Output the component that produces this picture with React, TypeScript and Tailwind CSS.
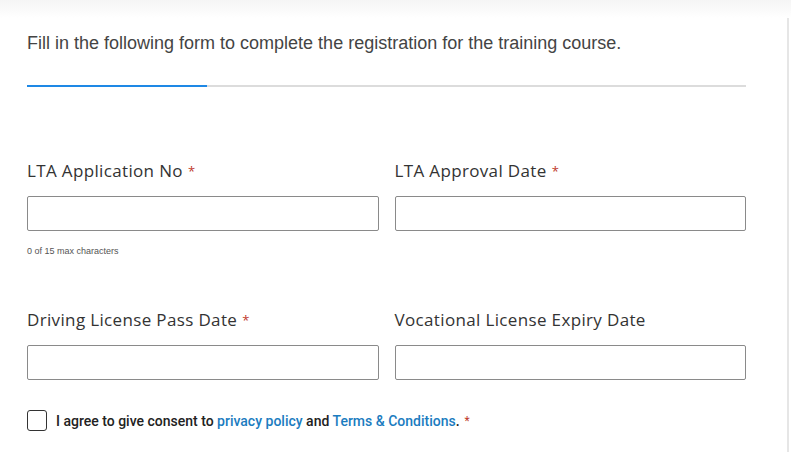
import React from "react";

const labelCls =
  "text-[17px] leading-[20px] tracking-[0.35px] text-[#333] font-['Open_Sans',sans-serif] h-[20px] whitespace-nowrap";
const inputCls = "mt-[15px] h-[35px] w-full border border-[#8a8a8a] rounded-[2px] bg-white outline-none";

function Star() {
  return <span className="text-[#c0392b] text-[13px] ml-[5px] align-top tracking-normal">*</span>;
}

export default function App() {
  return (
    <div className="w-[791px] h-[452px] bg-white relative overflow-hidden">
      <div className="absolute top-0 left-0 right-0 h-[18px] bg-gradient-to-b from-[#f5f5f5] to-white" />
      <div className="absolute top-[18px] right-[2px] bottom-0 w-[2px] bg-[#e6e6e6]" />
      <div className="relative pl-[27px] pr-[45px] pt-[32px]">
        <p className="text-[18px] leading-[22px] text-[#444] font-['Liberation_Sans',sans-serif]">
          Fill in the following form to complete the registration for the training course.
        </p>
        <div className="mt-[31px] flex h-[2px] w-[719px]">
          <div className="w-[180px] bg-[#1e88e5]" />
          <div className="flex-1 bg-[#dcdcdc]" />
        </div>
        <div className="mt-[74px] grid grid-cols-2 gap-x-[16px] w-[719px]">
          <div className="flex flex-col">
            <label className={labelCls}>
              LTA Application No
              <Star />
            </label>
            <input className={inputCls} />
            <div className="mt-[14px] h-[12px] text-[9px] leading-[12px] text-[#555] font-['Liberation_Sans',sans-serif]">
              0 of 15 max characters
            </div>
          </div>
          <div className="flex flex-col">
            <label className={labelCls}>
              LTA Approval Date
              <Star />
            </label>
            <input className={inputCls} />
          </div>
        </div>
        <div className="mt-[53px] grid grid-cols-2 gap-x-[16px] w-[719px]">
          <div className="flex flex-col">
            <label className={labelCls}>
              Driving License Pass Date
              <Star />
            </label>
            <input className={inputCls} />
          </div>
          <div className="flex flex-col">
            <label className={labelCls}>Vocational License Expiry Date</label>
            <input className={inputCls} />
          </div>
        </div>
        <div className="mt-[30px] flex items-center">
          <div className="w-[20px] h-[21px] border border-[#333] rounded-[3px] bg-white" />
          <span className="ml-[9px] text-[14px] leading-[20px] font-medium text-[#222] font-['Roboto',sans-serif]">
            I agree to give consent to <span className="text-[#1b7cc0]">privacy policy</span> and{" "}
            <span className="text-[#1b7cc0]">Terms &amp; Conditions</span>.
            <span className="text-[#c0392b] text-[12px] ml-[5px] align-top font-normal">*</span>
          </span>
        </div>
      </div>
    </div>
  );
}
